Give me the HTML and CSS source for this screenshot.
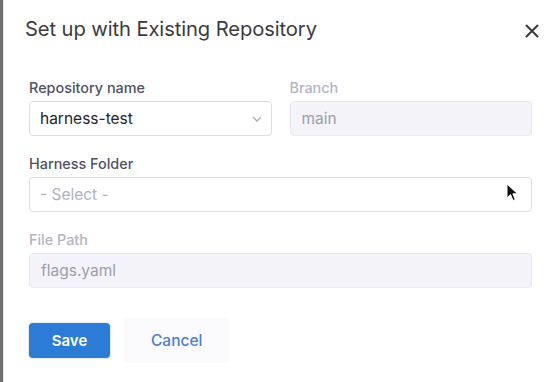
FILE: index.html
```html
<!DOCTYPE html>
<html lang="en">
<head>
  <meta charset="UTF-8">
  <title>Set up with Existing Repository</title>
  <link rel="stylesheet" href="styles.css">
</head>
<body>
  <div class="dialog">
    <div class="dialog-header">
      <div class="dialog-title">Set up with Existing Repository</div>
      <button class="close-btn" aria-label="Close">
        <svg width="14" height="14" viewBox="0 0 14 14">
          <path d="M1.5 1.5 L12.5 12.5 M12.5 1.5 L1.5 12.5" stroke="#3d3d40" stroke-width="2.1" stroke-linecap="round"/>
        </svg>
      </button>
    </div>

    <div class="form">
      <div class="row">
        <div class="field">
          <label class="label">Repository name</label>
          <div class="input select">
            <span class="value">harness-test</span>
            <svg class="chevron" width="10" height="6" viewBox="0 0 10 6">
              <path d="M1 1 L5 5 L9 1" fill="none" stroke="#a9aabb" stroke-width="1.3"/>
            </svg>
          </div>
        </div>
        <div class="field">
          <label class="label disabled">Branch</label>
          <div class="input is-disabled"><span class="value">main</span></div>
        </div>
      </div>

      <div class="field">
        <label class="label">Harness Folder</label>
        <div class="input select">
          <span class="value placeholder">- Select -</span>
          <svg class="cursor" width="13" height="19" viewBox="0 0 13 19">
            <path d="M1 1 L1 15 L4.5 11.6 L7 17.5 L9.3 16.5 L6.9 10.8 L11.6 10.8 Z" fill="#111" stroke="#fff" stroke-width="1"/>
          </svg>
        </div>
      </div>

      <div class="field">
        <label class="label disabled">File Path</label>
        <div class="input is-disabled"><span class="value">flags.yaml</span></div>
      </div>
    </div>

    <div class="actions">
      <button class="btn btn-primary">Save</button>
      <button class="btn btn-link">Cancel</button>
    </div>
  </div>
</body>
</html>
```

FILE: styles.css
```css
html, body {
  margin: 0;
  height: 100%;
  font-family: 'Inter', 'Noto Sans', sans-serif;
}
body {
  background: #fff;
  border-left: 3px solid #6f6f72;
  box-sizing: border-box;
}
.dialog {
  height: 100%;
  box-shadow: inset 1px 0 0 #e6e6e9;
  padding: 17px 12px 0 22px;
  box-sizing: border-box;
}
.dialog-header {
  display: flex;
  align-items: center;
  justify-content: space-between;
  height: 24px;
}
.dialog-title {
  font-size: 20.2px;
  line-height: 24px;
  color: #3b3b40;
  letter-spacing: -0.1px;
}
.close-btn {
  border: none;
  background: none;
  padding: 0;
  width: 16px;
  height: 16px;
  display: flex;
  align-items: center;
  justify-content: center;
  cursor: pointer;
  margin-top: 3px;
}
.form {
  display: flex;
  flex-direction: column;
  gap: 19px;
  margin-top: 38px;
  padding-left: 4px;
  padding-right: 8px;
}
.row {
  display: grid;
  grid-template-columns: 1fr 1fr;
  column-gap: 18px;
}
.field {
  display: flex;
  flex-direction: column;
  gap: 4px;
}
.label {
  font-size: 14.4px;
  line-height: 18px;
  font-weight: 500;
  color: #4f5162;
}
.label.disabled {
  color: #b3b4c4;
}
.input {
  position: relative;
  height: 35px;
  box-sizing: border-box;
  border: 1px solid #dcdde6;
  border-radius: 4px;
  display: flex;
  align-items: center;
  padding: 0 9px 0 10px;
  background: #fff;
}
.input .value {
  flex: 1;
  font-size: 15.5px;
  color: #23232b;
}
.input .placeholder {
  color: #b0b1c3;
}
.input.is-disabled {
  background: #f3f3f9;
  border-color: #e7e7ef;
  padding-left: 11px;
}
.input.is-disabled .value {
  color: #9c9db0;
}
.chevron {
  flex: none;
}
.cursor {
  position: absolute;
  right: 12px;
  top: 5px;
}
.actions {
  display: flex;
  align-items: center;
  gap: 14px;
  margin-top: 30px;
  padding-left: 4px;
}
.btn {
  height: 35px;
  border: none;
  border-radius: 4px;
  font-family: inherit;
  font-size: 15px;
  cursor: pointer;
}
.btn-primary {
  width: 81px;
  background: #2b7bd7;
  color: #fff;
  font-weight: 600;
  box-shadow: 0 0 3px rgba(43,123,215,0.35);
}
.btn-link {
  height: 45px;
  padding: 0 27px;
  background: #fafafc;
  color: #4b80c6;
  font-weight: 500;
  font-size: 15.5px;
}
```
